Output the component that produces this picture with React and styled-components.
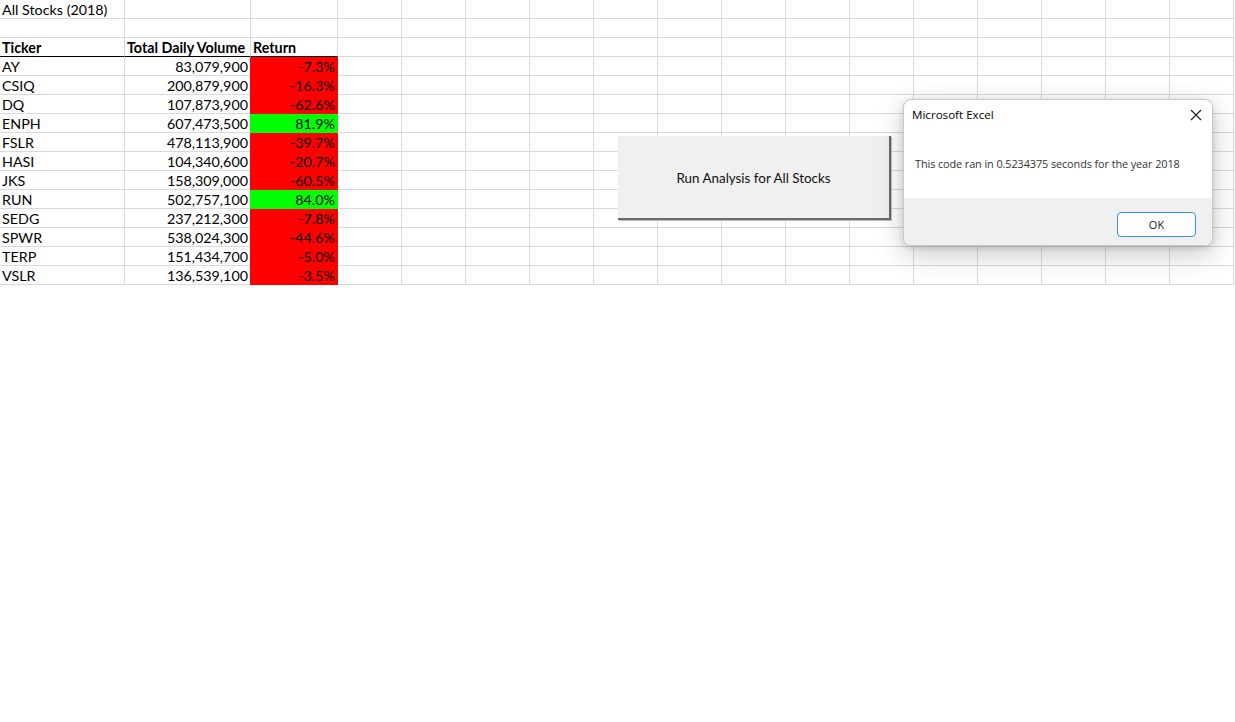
import React from "react";
import styled, { createGlobalStyle } from "styled-components";

const GlobalStyle = createGlobalStyle`
  html, body {
    margin: 0;
    padding: 0;
    background: #ffffff;
  }
  body {
    font-family: "Lato", "Liberation Sans", sans-serif;
  }
`;

const stocks = [
  { ticker: "AY", volume: "83,079,900", ret: "-7.3%", up: false },
  { ticker: "CSIQ", volume: "200,879,900", ret: "-16.3%", up: false },
  { ticker: "DQ", volume: "107,873,900", ret: "-62.6%", up: false },
  { ticker: "ENPH", volume: "607,473,500", ret: "81.9%", up: true },
  { ticker: "FSLR", volume: "478,113,900", ret: "-39.7%", up: false },
  { ticker: "HASI", volume: "104,340,600", ret: "-20.7%", up: false },
  { ticker: "JKS", volume: "158,309,000", ret: "-60.5%", up: false },
  { ticker: "RUN", volume: "502,757,100", ret: "84.0%", up: true },
  { ticker: "SEDG", volume: "237,212,300", ret: "-7.8%", up: false },
  { ticker: "SPWR", volume: "538,024,300", ret: "-44.6%", up: false },
  { ticker: "TERP", volume: "151,434,700", ret: "-5.0%", up: false },
  { ticker: "VSLR", volume: "136,539,100", ret: "-3.5%", up: false },
];

const EMPTY_COLS = 14;
const TOTAL_ROWS = 15;

//sheet
const Sheet = styled.div`
  position: relative;
  width: 1235px;
  height: 722px;
  overflow: hidden;
`;

const Grid = styled.div`
  display: grid;
  grid-template-columns: 125px 126px 87px repeat(${EMPTY_COLS}, 64px);
  grid-auto-rows: 19px;
  width: 1234px;
`;

const Cell = styled.div`
  box-sizing: border-box;
  border-right: 1px solid ${p => (p.$fill ? p.$fill : "#dadada")};
  border-bottom: 1px solid
    ${p => (p.$underline ? "#000000" : p.$fill ? p.$fill : "#dadada")};
  background: ${p => p.$fill || "#ffffff"};
  margin-left: ${p => (p.$fill ? "-1px" : "0")};
  padding: 0 2px;
  font-size: 14.3px;
  line-height: 19px;
  font-weight: ${p => (p.$bold ? 700 : 400)};
  color: #000000;
  text-align: ${p => (p.$right ? "right" : "left")};
  white-space: nowrap;
  overflow: visible;
`;

//floating form button
const MacroButton = styled.div`
  position: absolute;
  left: 618px;
  top: 136px;
  width: 271px;
  height: 81px;
  background: #f0f0f0;
  border-right: 2px solid #6b6b6b;
  border-bottom: 2px solid #6b6b6b;
  box-shadow: 1px 1px 0 #bdbdbd;
  display: flex;
  align-items: center;
  justify-content: center;
  padding-top: 1px;
  box-sizing: content-box;
  font-family: "Lato", "Liberation Sans", sans-serif;
  font-size: 13.4px;
  color: #111111;
`;

//message box
const Dialog = styled.div`
  position: absolute;
  left: 903px;
  top: 99px;
  width: 310px;
  height: 147px;
  box-sizing: border-box;
  border: 1px solid #c9c9c9;
  border-radius: 8px;
  overflow: hidden;
  background: #ffffff;
  box-shadow: 0 8px 28px rgba(0, 0, 0, 0.22), 0 2px 6px rgba(0, 0, 0, 0.12);
  display: flex;
  flex-direction: column;
  font-family: "Open Sans", "Noto Sans", sans-serif;
`;

const DialogBody = styled.div`
  flex: 1;
  display: flex;
  flex-direction: column;
  padding: 6px 8px 0 8px;
`;

const TitleRow = styled.div`
  display: flex;
  align-items: center;
  justify-content: space-between;
  height: 16px;
`;

const Title = styled.span`
  font-size: 11.6px;
  color: #000000;
`;

const Close = styled.div`
  width: 12px;
  height: 12px;
  margin-right: 2px;
  margin-top: 1px;
  display: flex;
`;

const Message = styled.p`
  margin: 34px 0 0 3px;
  font-size: 10.9px;
  color: #333333;
  letter-spacing: -0.1px;
`;

const Footer = styled.div`
  height: 47px;
  background: #f0f0f0;
  display: flex;
  align-items: center;
  justify-content: flex-end;
  padding-right: 16px;
`;

const OkButton = styled.button`
  width: 79px;
  height: 25px;
  box-sizing: border-box;
  border: 1px solid #3b8fd6;
  border-radius: 4px;
  background: #fdfdfd;
  font-family: "Open Sans", "Noto Sans", sans-serif;
  font-size: 11px;
  color: #1b1b1b;
  margin-top: 5px;
`;

function buildRows() {
  const rows = [];
  const blanks = key =>
    Array.from({ length: EMPTY_COLS }, (_, i) => <Cell key={`${key}-e${i}`} />);

  rows.push(
    <React.Fragment key="r0">
      <Cell>All Stocks (2018)</Cell>
      <Cell />
      <Cell />
      {blanks("r0")}
    </React.Fragment>
  );
  rows.push(
    <React.Fragment key="r1">
      <Cell />
      <Cell />
      <Cell />
      {blanks("r1")}
    </React.Fragment>
  );
  rows.push(
    <React.Fragment key="r2">
      <Cell $bold $underline>Ticker</Cell>
      <Cell $bold $underline>Total Daily Volume</Cell>
      <Cell $bold $underline>Return</Cell>
      {blanks("r2")}
    </React.Fragment>
  );
  stocks.forEach(s => {
    rows.push(
      <React.Fragment key={s.ticker}>
        <Cell>{s.ticker}</Cell>
        <Cell $right>{s.volume}</Cell>
        <Cell $right $fill={s.up ? "#00ff00" : "#ff0000"}>{s.ret}</Cell>
        {blanks(s.ticker)}
      </React.Fragment>
    );
  });
  return rows.slice(0, TOTAL_ROWS);
}

export default function App() {
  return (
    <>
      <GlobalStyle />
      <Sheet>
        <Grid>{buildRows()}</Grid>

        <MacroButton>Run Analysis for All Stocks</MacroButton>

        <Dialog>
          <DialogBody>
            <TitleRow>
              <Title>Microsoft Excel</Title>
              <Close>
                <svg width="12" height="12" viewBox="0 0 12 12">
                  <path d="M1 1 L11 11 M11 1 L1 11" stroke="#1a1a1a" strokeWidth="1.1" fill="none" />
                </svg>
              </Close>
            </TitleRow>
            <Message>This code ran in 0.5234375 seconds for the year 2018</Message>
          </DialogBody>
          <Footer>
            <OkButton>OK</OkButton>
          </Footer>
        </Dialog>
      </Sheet>
    </>
  );
}
